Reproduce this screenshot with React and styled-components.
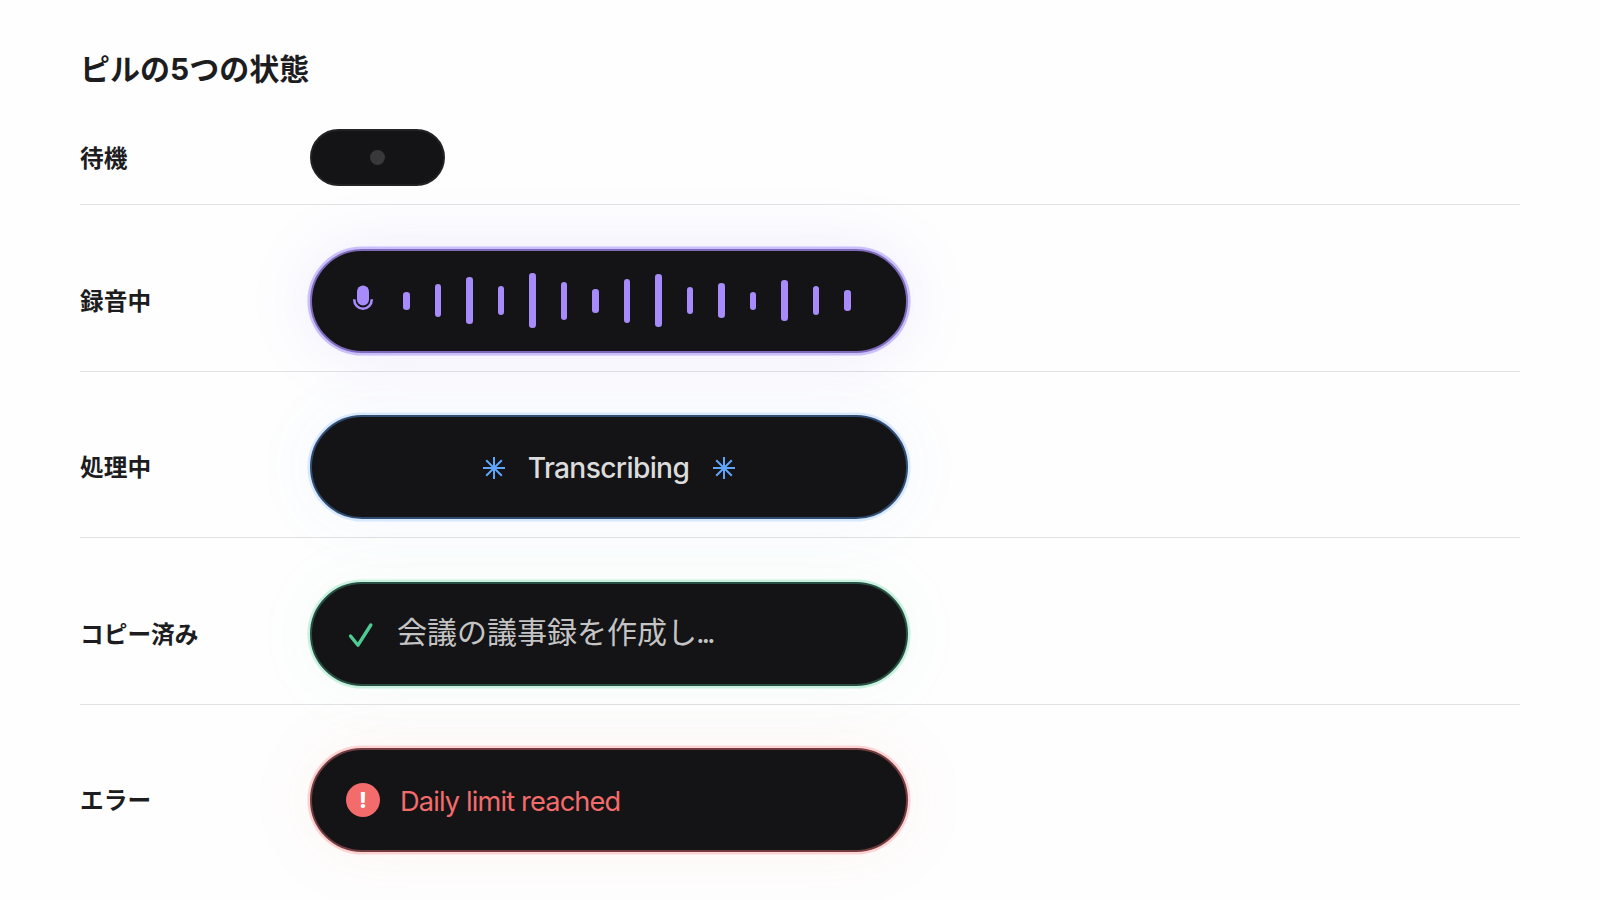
import React from 'react'
import styled, { createGlobalStyle } from 'styled-components';

const bars = [18, 32.6, 47, 28.6, 55, 37.8, 23.6, 44, 53, 26.8, 35, 17.6, 41, 28.8, 21]

function Mic() {
  return (
    <MicIcon viewBox="0 0 20 26">
      <rect x="4" y="0.4" width="12" height="20" rx="6" fill="#a78bfa" />
      <path d="M1.3 14.2V15A8.7 8.7 0 0 0 18.7 15V14.2" fill="none" stroke="#a78bfa" strokeWidth="2.6" />
    </MicIcon>
  )
}

function Spark() {
  return (
    <SparkIcon viewBox="0 0 22 22">
      <path d="M11 0V22M0 11H22M3.2 3.2L18.8 18.8M18.8 3.2L3.2 18.8" stroke="#60a5fa" strokeWidth="2" />
      <circle cx="11" cy="11" r="2.4" fill="#60a5fa" />
    </SparkIcon>
  )
}

function Row({ label, children }) {
  return (
    <RowWrap>
      <Label>{label}</Label>
      {children}
    </RowWrap>
  )
}

function App() {
  return (
    <Page>
      <GlobalStyle />
      <Title>ピルの5つの状態</Title>

      <IdleRow>
        <Label>待機</Label>
        <IdlePill>
          <Dot />
        </IdlePill>
      </IdleRow>

      <Row label="録音中">
        <Pill line="#7f6aba" ring="rgba(155, 138, 250, 0.5)" glow="rgba(124, 92, 250, 0.11)" left="41px">
          <Mic />
          <Wave>
            {bars.map((h, i) => (
              <Bar key={i} style={{ height: h }} />
            ))}
          </Wave>
        </Pill>
      </Row>

      <Row label="処理中">
        <Pill line="#2f4c73" ring="rgba(96, 165, 250, 0.22)" glow="rgba(96, 150, 250, 0.055)" center>
          <Spark />
          <Transcribing>Transcribing</Transcribing>
          <Spark />
        </Pill>
      </Row>

      <Row label="コピー済み">
        <Pill line="#275042" ring="rgba(74, 212, 151, 0.28)" glow="rgba(74, 212, 151, 0.05)" left="36px">
          <CheckIcon viewBox="0 0 26 26">
            <path d="M2.5 14L10 23.2L22.8 3" />
          </CheckIcon>
          <Copied>会議の議事録を作成し<Dots>...</Dots></Copied>
        </Pill>
      </Row>

      <Row label="エラー">
        <Pill line="#713b3f" ring="rgba(248, 113, 113, 0.28)" glow="rgba(248, 113, 113, 0.08)" left="34px">
          <Alert>!</Alert>
          <ErrorText>Daily limit reached</ErrorText>
        </Pill>
      </Row>
    </Page>
  )
}

export default App

const GlobalStyle = createGlobalStyle`
  body {
    margin: 0;
    background: #fefefe;
    overflow: hidden;
  }
  * {
    box-sizing: border-box;
  }
`
const Page = styled.div`
  height: 900px;
  padding: 47px 80px 0;
  color: #1d1d1f;
  font-family: Inter, "Noto Sans CJK JP", sans-serif;
  -webkit-font-smoothing: antialiased;
`
const Title = styled.h1`
  margin: 0;
  height: 82px;
  font-size: 30px;
  line-height: 44px;
  font-weight: 700;
`
const RowWrap = styled.div`
  display: flex;
  align-items: center;
  padding: 43.5px 0 18px;
  border-bottom: 1px solid #e2e2e5;

  &:last-child {
    border-bottom: none;
  }
`
const IdleRow = styled(RowWrap)`
  padding: 0 0 18.25px;
`
const Label = styled.div`
  width: 230px;
  padding-top: 2px;
  font-size: 23.7px;
  line-height: 34px;
  font-weight: 700;
`
const IdlePill = styled.div`
  display: flex;
  align-items: center;
  justify-content: center;
  width: 135px;
  height: 57px;
  border: 2px solid #232325;
  border-radius: 29px;
  background: #141416;
`
const Dot = styled.div`
  width: 15px;
  height: 15px;
  border-radius: 50%;
  background: #38383a;
`
const Pill = styled.div.withConfig({
  shouldForwardProp: prop => !['line', 'ring', 'glow', 'left', 'center'].includes(prop),
})`
  display: flex;
  align-items: center;
  justify-content: ${props => props.center ? 'center' : 'flex-start'};
  width: 598px;
  height: 104px;
  padding-left: ${props => props.left || '0'};
  border: 2px solid ${props => props.line};
  border-radius: 52px;
  background: #141416;
  box-shadow: 0 0 0 2.6px ${props => props.ring}, 0 0 66px 3px ${props => props.glow};
`
const MicIcon = styled.svg`
  width: 20px;
  height: 26px;
  margin: 0 30px 6px 0;
`
const Wave = styled.div`
  display: flex;
  align-items: center;
  gap: 25px;
`
const Bar = styled.div`
  width: 6.5px;
  border-radius: 3.2px;
  background: #a78bfa;
`
const SparkIcon = styled.svg`
  width: 22px;
  height: 22px;
  margin-top: 2px;
`
const Transcribing = styled.span`
  margin: 2px 24px 0 23px;
  font-size: 28.2px;
  font-weight: 500;
  letter-spacing: -0.65px;
  line-height: 36px;
  color: #dcdcdc;
`
const CheckIcon = styled.svg`
  width: 26px;
  height: 26px;
  margin: 3px 23px 0 0;

  path {
    fill: none;
    stroke: #4ecb93;
    stroke-width: 3.4;
    stroke-linecap: round;
    stroke-linejoin: round;
  }
`
const Copied = styled.span`
  margin-top: -3px;
  font-size: 30px;
  line-height: 44px;
  color: #c4c4c5;
`
const Dots = styled.span`
  margin-left: -1px;
  letter-spacing: -3.1px;
`
const Alert = styled.div`
  display: flex;
  align-items: center;
  justify-content: center;
  width: 34px;
  height: 34px;
  border-radius: 50%;
  background: #f36b6b;
  color: #fff;
  font-size: 22px;
  font-weight: 800;
`
const ErrorText = styled.span`
  margin: 3px 0 0 20px;
  font-size: 27.2px;
  letter-spacing: -0.85px;
  line-height: 36px;
  color: #f36b6b;
`
